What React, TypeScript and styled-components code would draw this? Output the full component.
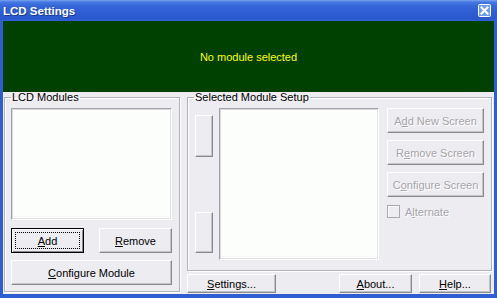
import * as React from 'react';
import styled, { createGlobalStyle, css } from 'styled-components';

const GlobalStyle = createGlobalStyle`
  html, body {
    margin: 0;
    padding: 0;
    overflow: hidden;
    background: #ffffff;
  }
`;

const App: React.FC = () => {
  return (
    <>
      <GlobalStyle />
      <StyledWindow>
        <StyledTitleBar>
          <StyledTitle>LCD Settings</StyledTitle>
          <CloseIcon />
        </StyledTitleBar>
        <StyledClient>
          <StyledLcdPanel>No module selected</StyledLcdPanel>
          <StyledMain>
            <StyledGroup $width={176}>
              <StyledLegend>LCD Modules</StyledLegend>
              <StyledListBox $width={161} $height={112} />
              <StyledButtonRow>
                <StyledButton $width={73} $height={25} $isDefault>
                  <StyledFocus>
                    <u>A</u>dd
                  </StyledFocus>
                </StyledButton>
                <StyledButton $width={73} $height={25}>
                  <u>R</u>emove
                </StyledButton>
              </StyledButtonRow>
              <StyledButton $width={161} $height={25} $top={7}>
                <u>C</u>onfigure Module
              </StyledButton>
            </StyledGroup>

            <StyledRightColumn>
              <StyledGroup $width={305} $padBottom={10}>
                <StyledLegend>Selected Module Setup</StyledLegend>
                <StyledSetupRow>
                  <StyledArrowColumn>
                    <StyledButton $width={18} $height={42} />
                    <StyledButton $width={18} $height={41} />
                  </StyledArrowColumn>
                  <StyledListBox $width={160} $height={152} />
                  <StyledScreenColumn>
                    <StyledButton $width={97} $height={25} disabled>
                      A<u>d</u>d New Screen
                    </StyledButton>
                    <StyledButton $width={97} $height={25} disabled>
                      R<u>e</u>move Screen
                    </StyledButton>
                    <StyledButton $width={97} $height={25} disabled>
                      C<u>o</u>nfigure Screen
                    </StyledButton>
                    <StyledCheckRow>
                      <StyledCheckBox />
                      <span>
                        A<u>l</u>ternate
                      </span>
                    </StyledCheckRow>
                  </StyledScreenColumn>
                </StyledSetupRow>
              </StyledGroup>
              <StyledFooter>
                <StyledButton $width={89} $height={19}>
                  <u>S</u>ettings...
                </StyledButton>
                <StyledFooterRight>
                  <StyledButton $width={73} $height={19}>
                    <u>A</u>bout...
                  </StyledButton>
                  <StyledButton $width={72} $height={19}>
                    <u>H</u>elp...
                  </StyledButton>
                </StyledFooterRight>
              </StyledFooter>
            </StyledRightColumn>
          </StyledMain>
        </StyledClient>
      </StyledWindow>
    </>
  );
};

const CloseIcon: React.FC = () => (
  <svg width='13' height='13' viewBox='0 0 13 13' xmlns='http://www.w3.org/2000/svg'>
    <rect x='0.5' y='0.5' width='12' height='12' rx='1' fill='#6f9cf0' stroke='#ffffff' />
    <path d='M3.5 3.5 L9.5 9.5 M9.5 3.5 L3.5 9.5' stroke='#ffffff' strokeWidth='2' strokeLinecap='square' />
  </svg>
);

export default App;

const FONT = `'Liberation Sans', Arial, sans-serif`;
const FACE = '#edecf0';

const StyledWindow = styled.div`
  width: 497px;
  height: 298px;
  display: flex;
  flex-direction: column;
  background: #2f5ed3;
  font-family: ${FONT};
  font-size: 11px;
  color: #000;
`;
const StyledTitleBar = styled.div`
  height: 21px;
  flex: none;
  display: flex;
  flex-direction: row;
  align-items: center;
  justify-content: space-between;
  padding: 0 6px 0 3px;
  background: linear-gradient(
    #7aa4f0 0px,
    #4679e2 2px,
    #3566d8 6px,
    #2d5cd2 14px,
    #2a58cc 19px,
    #3363d6 21px
  );
  & > svg {
    margin-top: -1px;
  }
`;
const StyledTitle = styled.span`
  font-family: ${FONT};
  font-weight: bold;
  font-size: 11.5px;
  color: #ffffff;
  text-shadow: 1px 1px 0 #1a3c96;
`;
const StyledClient = styled.div`
  flex: 1;
  display: flex;
  flex-direction: column;
  margin: 0 3px 4px 3px;
  background: ${FACE};
`;
const StyledLcdPanel = styled.div`
  height: 71px;
  flex: none;
  display: flex;
  align-items: center;
  justify-content: center;
  background: #004000;
  color: #ffff00;
  font-size: 11px;
`;
const StyledMain = styled.div`
  display: flex;
  flex-direction: row;
  align-items: flex-start;
  gap: 7px;
  padding-left: 1px;
`;
const StyledGroup = styled.fieldset<{ $width: number; $padBottom?: number }>`
  box-sizing: border-box;
  width: ${(p) => p.$width}px;
  margin: 0;
  min-width: 0;
  padding: 5px 7px ${(p) => p.$padBottom ?? 6}px 6px;
  border: 1px solid #b3b2b8;
  box-shadow: inset 1px 1px #ffffff, 1px 1px #ffffff;
  display: flex;
  flex-direction: column;
`;
const StyledLegend = styled.legend`
  padding: 0 1px;
  margin: 0;
  font-size: 11px;
  line-height: 11px;
  color: #000;
`;
const StyledListBox = styled.div<{ $width: number; $height: number }>`
  box-sizing: border-box;
  flex: none;
  width: ${(p) => p.$width}px;
  height: ${(p) => p.$height}px;
  background: #fbfefb;
  border-top: 1px solid #a4a3a8;
  border-left: 1px solid #a4a3a8;
  border-right: 1px solid #ffffff;
  border-bottom: 1px solid #ffffff;
  box-shadow: inset 1px 1px #d8d7dc, inset -1px -1px #e4e3e8;
`;
const StyledButtonRow = styled.div`
  display: flex;
  flex-direction: row;
  justify-content: space-between;
  margin-top: 8px;
`;
const StyledButton = styled.button<{
  $width: number;
  $height: number;
  $top?: number;
  $isDefault?: boolean;
}>`
  box-sizing: border-box;
  flex: none;
  width: ${(p) => p.$width}px;
  height: ${(p) => p.$height}px;
  margin: ${(p) => p.$top ?? 0}px 0 0 0;
  padding: 0;
  display: flex;
  align-items: center;
  justify-content: center;
  font-family: ${FONT};
  font-size: 11px;
  color: #000;
  background: ${FACE};
  border: 1px solid;
  border-color: #ffffff #8a898e #8a898e #ffffff;
  box-shadow: inset -1px -1px #c4c3c8;
  border-radius: 0;
  cursor: default;
  &:disabled {
    color: #a6a5aa;
    text-shadow: 1px 1px 0 #ffffff;
  }
  ${(p) =>
    p.$isDefault &&
    css`
      border-color: #000;
      box-shadow: inset 1px 1px #ffffff, inset -1px -1px #8a898e;
      padding: 3px;
    `}
`;
const StyledFocus = styled.span`
  box-sizing: border-box;
  flex: 1;
  align-self: stretch;
  display: flex;
  align-items: center;
  justify-content: center;
  border: 1px dotted #000;
`;
const StyledRightColumn = styled.div`
  display: flex;
  flex-direction: column;
`;
const StyledSetupRow = styled.div`
  display: flex;
  flex-direction: row;
  align-items: flex-start;
  gap: 6px;
  & > :last-child {
    margin-left: 2px;
  }
`;
const StyledArrowColumn = styled.div`
  box-sizing: border-box;
  height: 152px;
  display: flex;
  flex-direction: column;
  justify-content: space-between;
  padding: 7px 0;
  margin-left: 1px;
`;
const StyledScreenColumn = styled.div`
  display: flex;
  flex-direction: column;
  gap: 7px;
`;
const StyledCheckRow = styled.div`
  display: flex;
  flex-direction: row;
  align-items: center;
  gap: 5px;
  margin-top: 1px;
  color: #a6a5aa;
  text-shadow: 1px 1px 0 #ffffff;
`;
const StyledCheckBox = styled.span`
  box-sizing: border-box;
  width: 13px;
  height: 13px;
  border: 1px solid #a9a8ad;
  background: ${FACE};
  box-shadow: inset 1px 1px #ffffff;
`;
const StyledFooter = styled.div`
  display: flex;
  flex-direction: row;
  justify-content: space-between;
  margin-top: 3px;
  padding-right: 1px;
`;
const StyledFooterRight = styled.div`
  display: flex;
  flex-direction: row;
  gap: 7px;
`;
